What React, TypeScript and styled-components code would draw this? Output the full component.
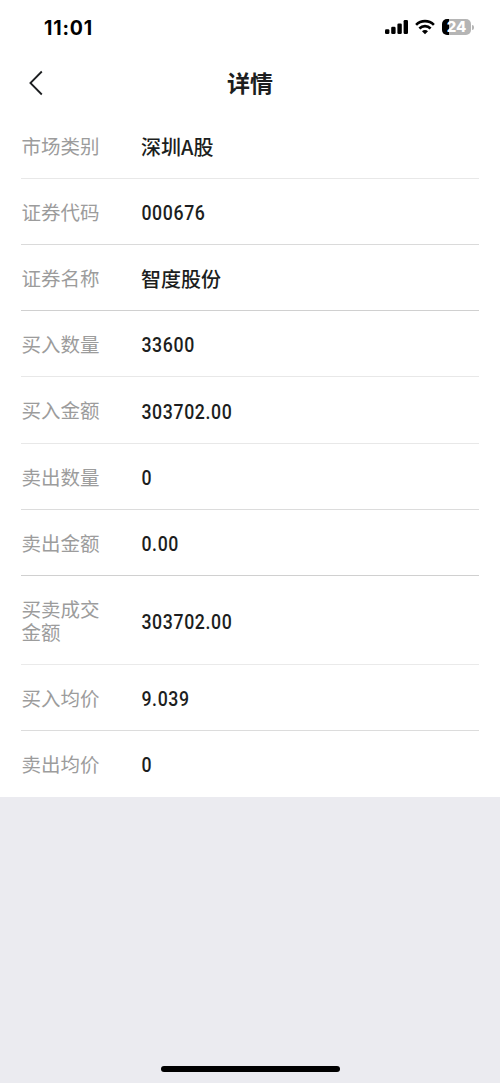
import React from "react";
import styled, { createGlobalStyle } from "styled-components";

const GlobalStyle = createGlobalStyle`
  * { box-sizing: border-box; }
  body {
    margin: 0;
    background: #ebebf0;
    font-family: Roboto, "Noto Sans CJK SC", sans-serif;
  }
`;

const Screen = styled.div`
  width: 500px;
  height: 1083px;
  display: flex;
  flex-direction: column;
  background: #ebebf0;
  overflow: hidden;
`;

const StatusBar = styled.header`
  height: 54px;
  flex: none;
  display: flex;
  justify-content: space-between;
  align-items: center;
  padding: 0 26px 0 44px;
  background: #fff;
`;

const Clock = styled.time`
  padding-top: 2px;
  font: 700 19.5px/24px Inter, sans-serif;
  letter-spacing: 0.8px;
  color: #000;
`;

const StatusIcons = styled.div`
  display: flex;
  align-items: center;
  gap: 7px;
`;

const Battery = styled.div`
  display: flex;
  align-items: center;
  gap: 1px;
`;

const BatteryBody = styled.div<{ $level: number }>`
  width: 29px;
  height: 16px;
  border-radius: 5px;
  background: linear-gradient(to right, #000 ${(p) => p.$level}%, #b5b5b5 ${(p) => p.$level}%);
  color: #fff;
  font: 800 15px/16px Inter, sans-serif;
  letter-spacing: -0.2px;
  text-align: center;
`;

const BatteryTip = styled.span`
  width: 2px;
  height: 5px;
  border-radius: 0 2px 2px 0;
  background: #b5b5b5;
`;

const NavBar = styled.nav`
  height: 59px;
  flex: none;
  display: grid;
  grid-template-columns: 72px 1fr 72px;
  align-items: center;
  padding-bottom: 2px;
  background: #fff;
`;

const BackButton = styled.button`
  display: flex;
  padding: 0 0 0 28px;
  border: 0;
  background: none;
`;

const Title = styled.h1`
  margin: 0;
  padding-bottom: 1px;
  text-align: center;
  font: 700 23px/30px "Noto Sans CJK SC", sans-serif;
  color: #1c1e20;
`;

const Details = styled.dl`
  margin: 0;
  padding: 0 21px;
  flex: none;
  background: #fff;
`;

const Row = styled.div<{ $height: number; $line?: string }>`
  height: ${(p) => p.$height}px;
  display: flex;
  align-items: center;
  border-bottom: 1px solid ${(p) => p.$line ?? "transparent"};
`;

const Label = styled.dt`
  width: 80px;
  margin-right: 40px;
  padding-left: 0.5px;
  font: 400 19.5px/23.4px "Noto Sans CJK SC", sans-serif;
  color: #9c9c9c;
`;

const Value = styled.dd`
  margin: 0;
  padding-top: 2px;
  font: 500 20px/24px "Noto Sans CJK SC", sans-serif;
  color: #1c1e20;
`;

const NumericValue = styled(Value)`
  padding: 3px 0 0 0.5px;
  font-family: Roboto, sans-serif;
  letter-spacing: 0.7px;
  transform: scaleX(0.885);
  transform-origin: left center;
`;

const HomeArea = styled.footer`
  margin-top: auto;
  padding-bottom: 11px;
  display: flex;
  justify-content: center;
`;

const HomeIndicator = styled.div`
  width: 179px;
  height: 6px;
  border-radius: 3px;
  background: #000;
`;

type Item = { label: string; value: string; height: number; line?: string };

const items: Item[] = [
  { label: "市场类别", value: "深圳A股", height: 66, line: "#e8e8e8" },
  { label: "证券代码", value: "000676", height: 66, line: "#dadada" },
  { label: "证券名称", value: "智度股份", height: 66, line: "#d0d0d0" },
  { label: "买入数量", value: "33600", height: 66, line: "#e8e8e8" },
  { label: "买入金额", value: "303702.00", height: 67, line: "#e8e8e8" },
  { label: "卖出数量", value: "0", height: 66, line: "#dcdcdc" },
  { label: "卖出金额", value: "0.00", height: 66, line: "#d0d0d0" },
  { label: "买卖成交金额", value: "303702.00", height: 89, line: "#eaeaea" },
  { label: "买入均价", value: "9.039", height: 66, line: "#dcdcdc" },
  { label: "卖出均价", value: "0", height: 66 },
];

export default function App() {
  return (
    <>
      <GlobalStyle />
      <Screen>
        <StatusBar>
          <Clock>11:01</Clock>
          <StatusIcons>
            <svg width="23" height="16" viewBox="0 0 23 16">
              <rect x="0" y="10.2" width="4.4" height="4.8" rx="1.3" />
              <rect x="6.2" y="7.7" width="4.4" height="7.3" rx="1.3" />
              <rect x="12.4" y="4.5" width="4.4" height="10.5" rx="1.3" />
              <rect x="18.6" y="1" width="4.4" height="14" rx="1.3" />
            </svg>
            <svg width="20" height="16" viewBox="0 0 20 16" fill="none" stroke="#000" strokeWidth="2.6">
              <path d="M1.1 5.8a12.6 12.6 0 0 1 17.8 0" />
              <path d="M4.4 9.5a7.9 7.9 0 0 1 11.2 0" />
              <path d="M10 15.2l-3-3a4.2 4.2 0 0 1 6 0z" fill="#000" stroke="none" />
            </svg>
            <Battery>
              <BatteryBody $level={24}>24</BatteryBody>
              <BatteryTip />
            </Battery>
          </StatusIcons>
        </StatusBar>
        <NavBar>
          <BackButton aria-label="返回">
            <svg width="16" height="26" viewBox="0 0 16 26" fill="none" stroke="#1c1e20" strokeWidth="1.8">
              <path d="M13.8 1.5L2.4 13l11.4 11.5" />
            </svg>
          </BackButton>
          <Title>详情</Title>
        </NavBar>
        <Details>
          {items.map((item) => {
            const ValueCell = /^[\d.]+$/.test(item.value) ? NumericValue : Value;
            return (
              <Row key={item.label} $height={item.height} $line={item.line}>
                <Label>{item.label}</Label>
                <ValueCell>{item.value}</ValueCell>
              </Row>
            );
          })}
        </Details>
        <HomeArea>
          <HomeIndicator />
        </HomeArea>
      </Screen>
    </>
  );
}
